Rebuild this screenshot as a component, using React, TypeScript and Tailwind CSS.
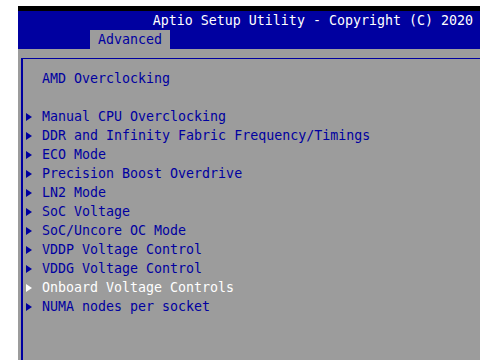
const items = [
  "Manual CPU Overclocking",
  "DDR and Infinity Fabric Frequency/Timings",
  "ECO Mode",
  "Precision Boost Overdrive",
  "LN2 Mode",
  "SoC Voltage",
  "SoC/Uncore OC Mode",
  "VDDP Voltage Control",
  "VDDG Voltage Control",
  "Onboard Voltage Controls",
  "NUMA nodes per socket",
];

const selected = "Onboard Voltage Controls";

function Arrow({ color }: { color: string }) {
  return (
    <svg width="6" height="8" viewBox="0 0 6 8" className="shrink-0">
      <polygon points="0,0 6,4 0,8" fill={color} />
    </svg>
  );
}

export default function App() {
  return (
    <div
      className="w-[480px] h-[360px] bg-white overflow-hidden pl-[18px] pt-[6px] text-[13.3px] leading-[19px]"
      style={{ fontFamily: '"DejaVu Sans Mono", monospace' }}
    >
      <div className="h-[5px] bg-black" />
      {/* header */}
      <div className="bg-[#0000a0] h-[38px] flex flex-col">
        <div className="h-[19px] flex justify-end pr-[7px] text-white whitespace-pre">
          Aptio Setup Utility - Copyright (C) 2020
        </div>
        <div className="h-[19px] flex pl-[72px]">
          <div className="bg-[#9c9c9c] text-[#0000a0] px-[8px] w-[80px]">Advanced</div>
        </div>
      </div>
      {/* body */}
      <div className="bg-[#9c9c9c] h-[311px] pt-[9px] pl-[3px]">
        <div className="h-full border-t border-l-2 border-[#0000a0] pt-[10px]">
          <div className="pl-[19px] text-[#0000a0] whitespace-pre">AMD Overclocking</div>
          <div className="h-[19px]" />
          {items.map((it) => {
            const sel = it === selected;
            const color = sel ? "#ffffff" : "#0000a0";
            return (
              <div key={it} className="flex items-center h-[19px] pl-[3px] whitespace-pre">
                <Arrow color={color} />
                <span className="ml-[10px]" style={{ color }}>
                  {it}
                </span>
              </div>
            );
          })}
        </div>
      </div>
    </div>
  );
}
